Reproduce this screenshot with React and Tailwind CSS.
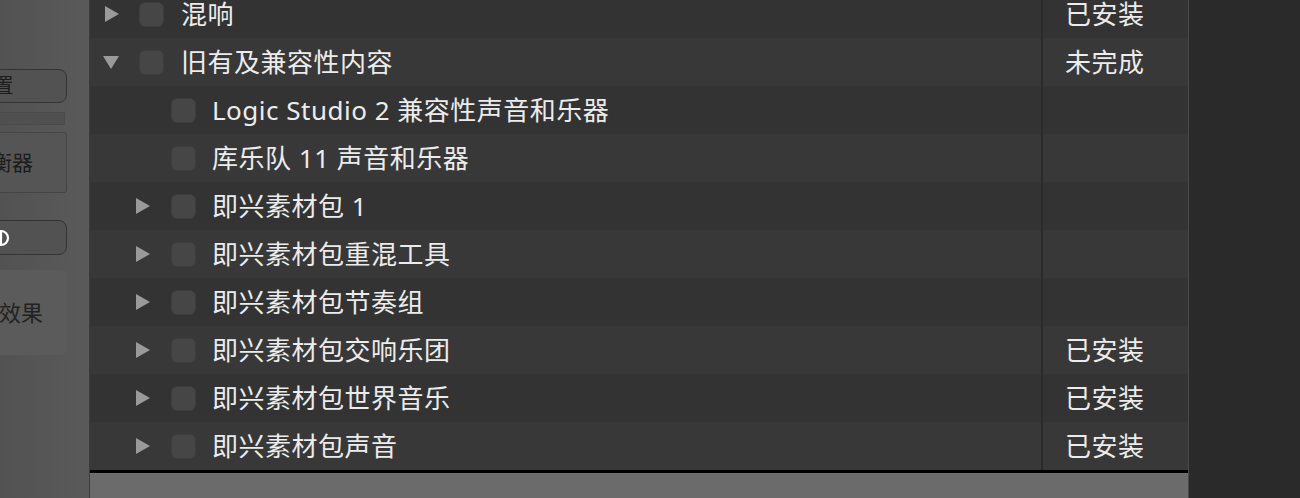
const rows = [
  { level: 0, arrow: "right", name: "混响", status: "已安装" },
  { level: 0, arrow: "down", name: "旧有及兼容性内容", status: "未完成" },
  { level: 1, arrow: null, name: "Logic Studio 2 兼容性声音和乐器", status: "" },
  { level: 1, arrow: null, name: "库乐队 11 声音和乐器", status: "" },
  { level: 1, arrow: "right", name: "即兴素材包 1", status: "" },
  { level: 1, arrow: "right", name: "即兴素材包重混工具", status: "" },
  { level: 1, arrow: "right", name: "即兴素材包节奏组", status: "" },
  { level: 1, arrow: "right", name: "即兴素材包交响乐团", status: "已安装" },
  { level: 1, arrow: "right", name: "即兴素材包世界音乐", status: "已安装" },
  { level: 1, arrow: "right", name: "即兴素材包声音", status: "已安装" },
];

const font = { fontFamily: '"Noto Sans", "Noto Sans CJK SC", sans-serif' };

function Arrow({ dir }) {
  if (dir === "down") {
    return (
      <svg width="16" height="14" viewBox="0 0 16 14">
        <path d="M0 1 L16 1 L8 14 Z" fill="#9a9a9a" />
      </svg>
    );
  }
  return (
    <svg width="14" height="16" viewBox="0 0 14 16">
      <path d="M0 0 L14 8 L0 16 Z" fill="#9a9a9a" />
    </svg>
  );
}

function Row({ row, index }) {
  const bg = index % 2 === 0 ? "bg-[#333333]" : "bg-[#383838]";
  return (
    <div className={`flex h-[48px] ${bg}`}>
      <div className="flex w-[951px] items-center">
        <div className={row.level === 0 ? "flex w-[49px] justify-end pr-[20px]" : "flex w-[81px] justify-end pr-[21px]"}>
          {row.arrow && <Arrow dir={row.arrow} />}
        </div>
        <div className="h-[25px] w-[25px] rounded-[6px] border border-[#3d3d3d] bg-[#464646]" />
        <span className={`${row.level === 0 ? "pl-[17px]" : "pl-[16px]"} whitespace-nowrap text-[26px] tracking-[0.5px] text-[#ececec]`}>
          {row.name}
        </span>
      </div>
      <div className="w-[2px] bg-[#2a2a2a]" />
      <div className="flex flex-1 items-center pl-[22px] text-[26px] tracking-[0.5px] text-[#ececec]">{row.status}</div>
    </div>
  );
}

function LeftPanel() {
  return (
    <div className="relative w-[90px] shrink-0 overflow-hidden border-r border-[#3b3b3b] bg-gradient-to-r from-[#525252] to-[#5a5a5a]">
      <div className="ml-[-80px] flex w-[147px] flex-col pt-[69px]">
        <div className="flex h-[34px] items-center justify-center rounded-[8px] border border-[#333] bg-[#525252] text-[20px] text-[#1c1c1c]">
          设置
        </div>
        <div className="mt-[9px] h-[13px] w-[145px] border border-[#4a4a4a] bg-[#505050]" />
        <div className="mt-[7px] flex h-[61px] items-center justify-center rounded-[3px] border border-[#444] bg-[#555] pl-[16px] text-[21px] text-[#1c1c1c]">
          均衡器
        </div>
        <div className="mt-[27px] flex h-[35px] items-center rounded-[8px] border border-[#333] bg-[#525252] pl-[70px]">
          <svg width="20" height="20" viewBox="0 0 20 20">
            <circle cx="10" cy="10" r="7" stroke="#fff" strokeWidth="2.2" fill="none" />
            <line x1="10" y1="4" x2="10" y2="16" stroke="#fff" strokeWidth="2.2" />
          </svg>
        </div>
        <div className="mt-[15px] flex h-[85px] items-center justify-end whitespace-nowrap rounded-[6px] bg-[#5b5b5b] pr-[24px] text-[22px] text-[#222]">
          效果
        </div>
      </div>
    </div>
  );
}

export default function App() {
  return (
    <div className="flex h-[498px] w-[1300px] overflow-hidden bg-[#2b2b2b]" style={font}>
      <LeftPanel />
      <div className="flex w-[1099px] shrink-0 flex-col border-r border-[#4a4a4a]">
        <div className="h-[470px] overflow-hidden bg-[#333]">
          <div className="mt-[-10px]">
            {rows.map((r, i) => (
              <Row key={i} row={r} index={i} />
            ))}
          </div>
        </div>
        <div className="h-[3px] bg-black" />
        <div className="flex-1 border-t border-dotted border-[#7a7a7a] bg-[#6b6b6b]" />
      </div>
      <div className="flex-1 bg-[#2a2a2a]" />
    </div>
  );
}
